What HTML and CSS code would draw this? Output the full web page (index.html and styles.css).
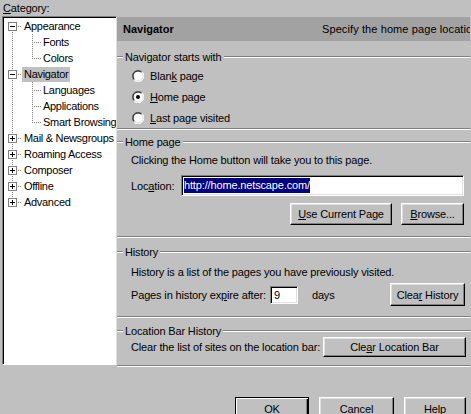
FILE: index.html
```html
<!DOCTYPE html>
<html>
<head>
<meta charset="utf-8">
<link rel="stylesheet" href="styles.css">
</head>
<body>
<div class="dialog">
  <div class="cat-label"><u>C</u>ategory:</div>
  <div class="main">
    <div class="tree">
      <div class="row"><span class="g1 first h"><svg class="box" width="9" height="9" viewBox="0 0 9 9"><rect x="0.5" y="0.5" width="8" height="8" fill="#fff" stroke="#808080"/><path d="M2 4.5H7" stroke="#000"/></svg></span><span class="lbl">Appearance</span></div>
      <div class="row"><span class="g1 mid"></span><span class="g2 mid h"></span><span class="lbl">Fonts</span></div>
      <div class="row"><span class="g1 mid"></span><span class="g2 last h"></span><span class="lbl">Colors</span></div>
      <div class="row"><span class="g1 mid h"><svg class="box" width="9" height="9" viewBox="0 0 9 9"><rect x="0.5" y="0.5" width="8" height="8" fill="#fff" stroke="#808080"/><path d="M2 4.5H7" stroke="#000"/></svg></span><span class="lbl sel-item">Navigator</span></div>
      <div class="row"><span class="g1 mid"></span><span class="g2 mid h"></span><span class="lbl">Languages</span></div>
      <div class="row"><span class="g1 mid"></span><span class="g2 mid h"></span><span class="lbl">Applications</span></div>
      <div class="row"><span class="g1 mid"></span><span class="g2 last h"></span><span class="lbl">Smart Browsing</span></div>
      <div class="row"><span class="g1 mid h"><svg class="box" width="9" height="9" viewBox="0 0 9 9"><rect x="0.5" y="0.5" width="8" height="8" fill="#fff" stroke="#808080"/><path d="M2 4.5H7M4.5 2V7" stroke="#000"/></svg></span><span class="lbl">Mail &amp; Newsgroups</span></div>
      <div class="row"><span class="g1 mid h"><svg class="box" width="9" height="9" viewBox="0 0 9 9"><rect x="0.5" y="0.5" width="8" height="8" fill="#fff" stroke="#808080"/><path d="M2 4.5H7M4.5 2V7" stroke="#000"/></svg></span><span class="lbl">Roaming Access</span></div>
      <div class="row"><span class="g1 mid h"><svg class="box" width="9" height="9" viewBox="0 0 9 9"><rect x="0.5" y="0.5" width="8" height="8" fill="#fff" stroke="#808080"/><path d="M2 4.5H7M4.5 2V7" stroke="#000"/></svg></span><span class="lbl">Composer</span></div>
      <div class="row"><span class="g1 mid h"><svg class="box" width="9" height="9" viewBox="0 0 9 9"><rect x="0.5" y="0.5" width="8" height="8" fill="#fff" stroke="#808080"/><path d="M2 4.5H7M4.5 2V7" stroke="#000"/></svg></span><span class="lbl">Offline</span></div>
      <div class="row"><span class="g1 last h"><svg class="box" width="9" height="9" viewBox="0 0 9 9"><rect x="0.5" y="0.5" width="8" height="8" fill="#fff" stroke="#808080"/><path d="M2 4.5H7M4.5 2V7" stroke="#000"/></svg></span><span class="lbl">Advanced</span></div>
    </div>
    <div class="panel">
      <div class="phead"><span class="ptitle">Navigator</span><span class="pdesc">Specify the home page location</span></div>
      <section class="sec s1">
        <div class="legend"><span class="dash"></span><span class="ltext">Navigator starts with</span><span class="lline"></span></div>
        <div class="radios">
          <div class="radio-row"><svg class="radio" width="12" height="12" viewBox="0 0 12 12"><circle cx="6" cy="6" r="5.5" fill="#fff"/><path d="M1.76 10.24A6 6 0 0 1 10.24 1.76" stroke="#808080" fill="none"/><path d="M2.46 9.54A5 5 0 0 1 9.54 2.46" stroke="#000" fill="none"/><path d="M10.24 1.76A6 6 0 0 1 1.76 10.24" stroke="#fff" fill="none"/><path d="M9.54 2.46A5 5 0 0 1 2.46 9.54" stroke="#dfdfdf" fill="none"/></svg><span>Blan<u>k</u> page</span></div>
          <div class="radio-row"><svg class="radio" width="12" height="12" viewBox="0 0 12 12"><circle cx="6" cy="6" r="5.5" fill="#fff"/><path d="M1.76 10.24A6 6 0 0 1 10.24 1.76" stroke="#808080" fill="none"/><path d="M2.46 9.54A5 5 0 0 1 9.54 2.46" stroke="#000" fill="none"/><path d="M10.24 1.76A6 6 0 0 1 1.76 10.24" stroke="#fff" fill="none"/><path d="M9.54 2.46A5 5 0 0 1 2.46 9.54" stroke="#dfdfdf" fill="none"/><circle cx="6" cy="6" r="2" fill="#000"/></svg><span><u>H</u>ome page</span></div>
          <div class="radio-row"><svg class="radio" width="12" height="12" viewBox="0 0 12 12"><circle cx="6" cy="6" r="5.5" fill="#fff"/><path d="M1.76 10.24A6 6 0 0 1 10.24 1.76" stroke="#808080" fill="none"/><path d="M2.46 9.54A5 5 0 0 1 9.54 2.46" stroke="#000" fill="none"/><path d="M10.24 1.76A6 6 0 0 1 1.76 10.24" stroke="#fff" fill="none"/><path d="M9.54 2.46A5 5 0 0 1 2.46 9.54" stroke="#dfdfdf" fill="none"/></svg><span><u>L</u>ast page visited</span></div>
        </div>
      </section>
      <section class="sec s2">
        <div class="legend"><span class="dash"></span><span class="ltext">Home page</span><span class="lline"></span></div>
        <div class="txt t2">Clicking the Home button will take you to this page.</div>
        <div class="loc-row"><span class="loc-lbl">Loc<u>a</u>tion:</span><div class="field"><span class="seltext">http://home.netscape.com/</span></div></div>
        <div class="btn-row"><button class="btn b-use"><u>U</u>se Current Page</button><button class="btn b-browse"><u>B</u>rowse...</button></div>
      </section>
      <section class="sec s3">
        <div class="legend"><span class="dash"></span><span class="ltext">History</span><span class="lline"></span></div>
        <div class="txt t3">History is a list of the pages you have previously visited.</div>
        <div class="hist-row"><span>Pages in history ex<u>p</u>ire after:</span><div class="field small">9</div><span class="days">days</span><button class="btn b-clear">Clea<u>r</u> History</button></div>
      </section>
      <section class="sec s4">
        <div class="legend"><span class="dash"></span><span class="ltext">Location Bar History</span><span class="lline"></span></div>
        <div class="lbh-row"><span>Clear the list of sites on the location bar:</span><button class="btn b-lbar">Cle<u>a</u>r Location Bar</button></div>
      </section>
    </div>
  </div>
  <div class="footer">
    <button class="btn default b-ok">OK</button>
    <button class="btn b-cancel">Cancel</button>
    <button class="btn b-help"><u>H</u>elp</button>
  </div>
</div>
</body>
</html>
```
FILE: styles.css
```css
html, body {
  margin: 0;
  padding: 0;
  background: #c0c0c0;
  overflow: hidden;
}
body {
  font-family: "Liberation Sans", Arial, sans-serif;
  font-size: 11px;
  letter-spacing: -0.15px;
  color: #000;
}
.dialog {
  width: 471px;
  height: 414px;
  overflow: hidden;
}
.cat-label {
  height: 16px;
  line-height: 16px;
  padding-left: 3px;
}
.main {
  display: flex;
  align-items: flex-start;
}
.tree {
  margin-left: 2px;
  width: 112px;
  height: 346px;
  background: #fff;
  border-style: solid;
  border-width: 1px;
  border-color: #808080 #dfdfdf #fff #808080;
  box-shadow: inset 1px 1px #000;
  padding: 1px 0 0 1px;
  flex: none;
  overflow: hidden;
  letter-spacing: -0.3px;
}
.row {
  display: flex;
  align-items: center;
  height: 16px;
  white-space: nowrap;
}
.g1, .g2 {
  flex: none;
  height: 16px;
  background-repeat: no-repeat;
  --V: repeating-linear-gradient(to bottom, #808080 0 1px, transparent 1px 2px);
  --H: repeating-linear-gradient(to right, #808080 0 1px, transparent 1px 2px);
  background-image: var(--V), var(--hz, none);
  background-size: 1px var(--vh, 16px), var(--hw, 10px) 1px;
  background-position: var(--vx) var(--vy, 0px), var(--vx) 8px;
}
.g1 { width: 18px; --vx: 8px; }
.g2 { width: 19px; --vx: 10px; }
.h { --hz: var(--H); }
.first { --vy: 8px; --vh: 8px; }
.mid { --vy: 0px; --vh: 16px; }
.last { --vy: 0px; --vh: 9px; }
.box {
  display: block;
  margin: 4px 0 0 4px;
}
.lbl {
  padding: 0 2px;
  line-height: 15px;
}
.sel-item {
  background: #c0c0c0;
}
.panel {
  margin-top: 1px;
  width: 353px;
  flex: none;
  overflow: hidden;
}
.phead {
  height: 24px;
  background: #a2a2a2;
  display: flex;
  align-items: center;
  padding-left: 6px;
  white-space: nowrap;
}
.ptitle {
  font-weight: bold;
  letter-spacing: 0;
  width: 199px;
  flex: none;
}
.pdesc { flex: none; letter-spacing: 0.1px; }
.sec {
  border-bottom: 1px solid #fff;
  box-shadow: inset 0 -1px #808080;
  padding-right: 6px;
  box-sizing: border-box;
}
.s1 { height: 89px; padding-top: 10px; }
.s2 { height: 108px; padding-top: 6px; }
.s3 { height: 80px; padding-top: 8px; }
.s4 { height: 49px; padding-top: 7px; }
.legend {
  display: flex;
  align-items: center;
  height: 12px;
  line-height: 12px;
  margin-right: -6px;
}
.dash, .lline {
  height: 0;
  border-top: 1px solid #808080;
  border-bottom: 1px solid #fff;
}
.dash { width: 6px; flex: none; }
.ltext { padding: 0 2px; white-space: nowrap; }
.lline { flex: 1; }
.radios {
  margin-top: 2px;
  padding-left: 15px;
}
.radio-row {
  height: 21px;
  display: flex;
  align-items: center;
  gap: 6px;
}
.radio { display: block; flex: none; }
.txt {
  padding-left: 14px;
  line-height: 14px;
  white-space: nowrap;
}
.t2 { margin-top: 5px; }
.t3 { margin-top: 7px; }
.loc-row {
  margin-top: 8px;
  padding-left: 14px;
  display: flex;
  align-items: center;
}
.loc-lbl { width: 50px; flex: none; }
.field {
  flex: 1;
  height: 21px;
  box-sizing: border-box;
  background: #fff;
  border: 1px solid;
  border-color: #808080 #fff #fff #808080;
  box-shadow: inset 1px 1px #000, inset -1px -1px #dfdfdf;
  padding: 2px 0 0 2px;
  line-height: 15px;
  white-space: nowrap;
}
.seltext {
  background: #000080;
  color: #fff;
  display: inline-block;
  line-height: 15px;
}
.btn-row {
  margin-top: 7px;
  display: flex;
  justify-content: flex-end;
  gap: 9px;
}
.btn {
  font-family: "Liberation Sans", Arial, sans-serif;
  font-size: 11px;
  letter-spacing: -0.15px;
  color: #000;
  background: #c0c0c0;
  border: 1px solid;
  border-color: #fff #000 #000 #fff;
  box-shadow: inset -1px -1px #808080, inset 1px 1px #dfdfdf;
  padding: 0;
  margin: 0;
  height: 22px;
  box-sizing: border-box;
  flex: none;
}
.btn.default {
  border-color: #000;
  box-shadow: inset 1px 1px #fff, inset -1px -1px #000, inset -2px -2px #808080;
}
.b-use { width: 102px; }
.b-browse { width: 63px; }
.hist-row {
  margin-top: 4px;
  padding-left: 14px;
  display: flex;
  align-items: center;
  height: 23px;
  white-space: nowrap;
}
.field.small {
  flex: none;
  width: 28px;
  height: 18px;
  margin-left: 4px;
  padding: 1px 0 0 3px;
  line-height: 14px;
}
.days { margin-left: 14px; }
.b-clear { margin-left: auto; width: 75px; height: 23px; margin-right: -1px; }
.lbh-row {
  padding-left: 14px;
  display: flex;
  align-items: center;
  height: 20px;
  white-space: nowrap;
}
.b-lbar { margin-left: auto; width: 143px; height: 20px; margin-right: -2px; }
.footer {
  display: flex;
  justify-content: flex-end;
  gap: 10px;
  padding: 30px 5px 0 0;
}
.b-ok { width: 74px; height: 23px; }
.b-cancel { width: 75px; height: 23px; }
.b-help { width: 62px; height: 23px; }
```
